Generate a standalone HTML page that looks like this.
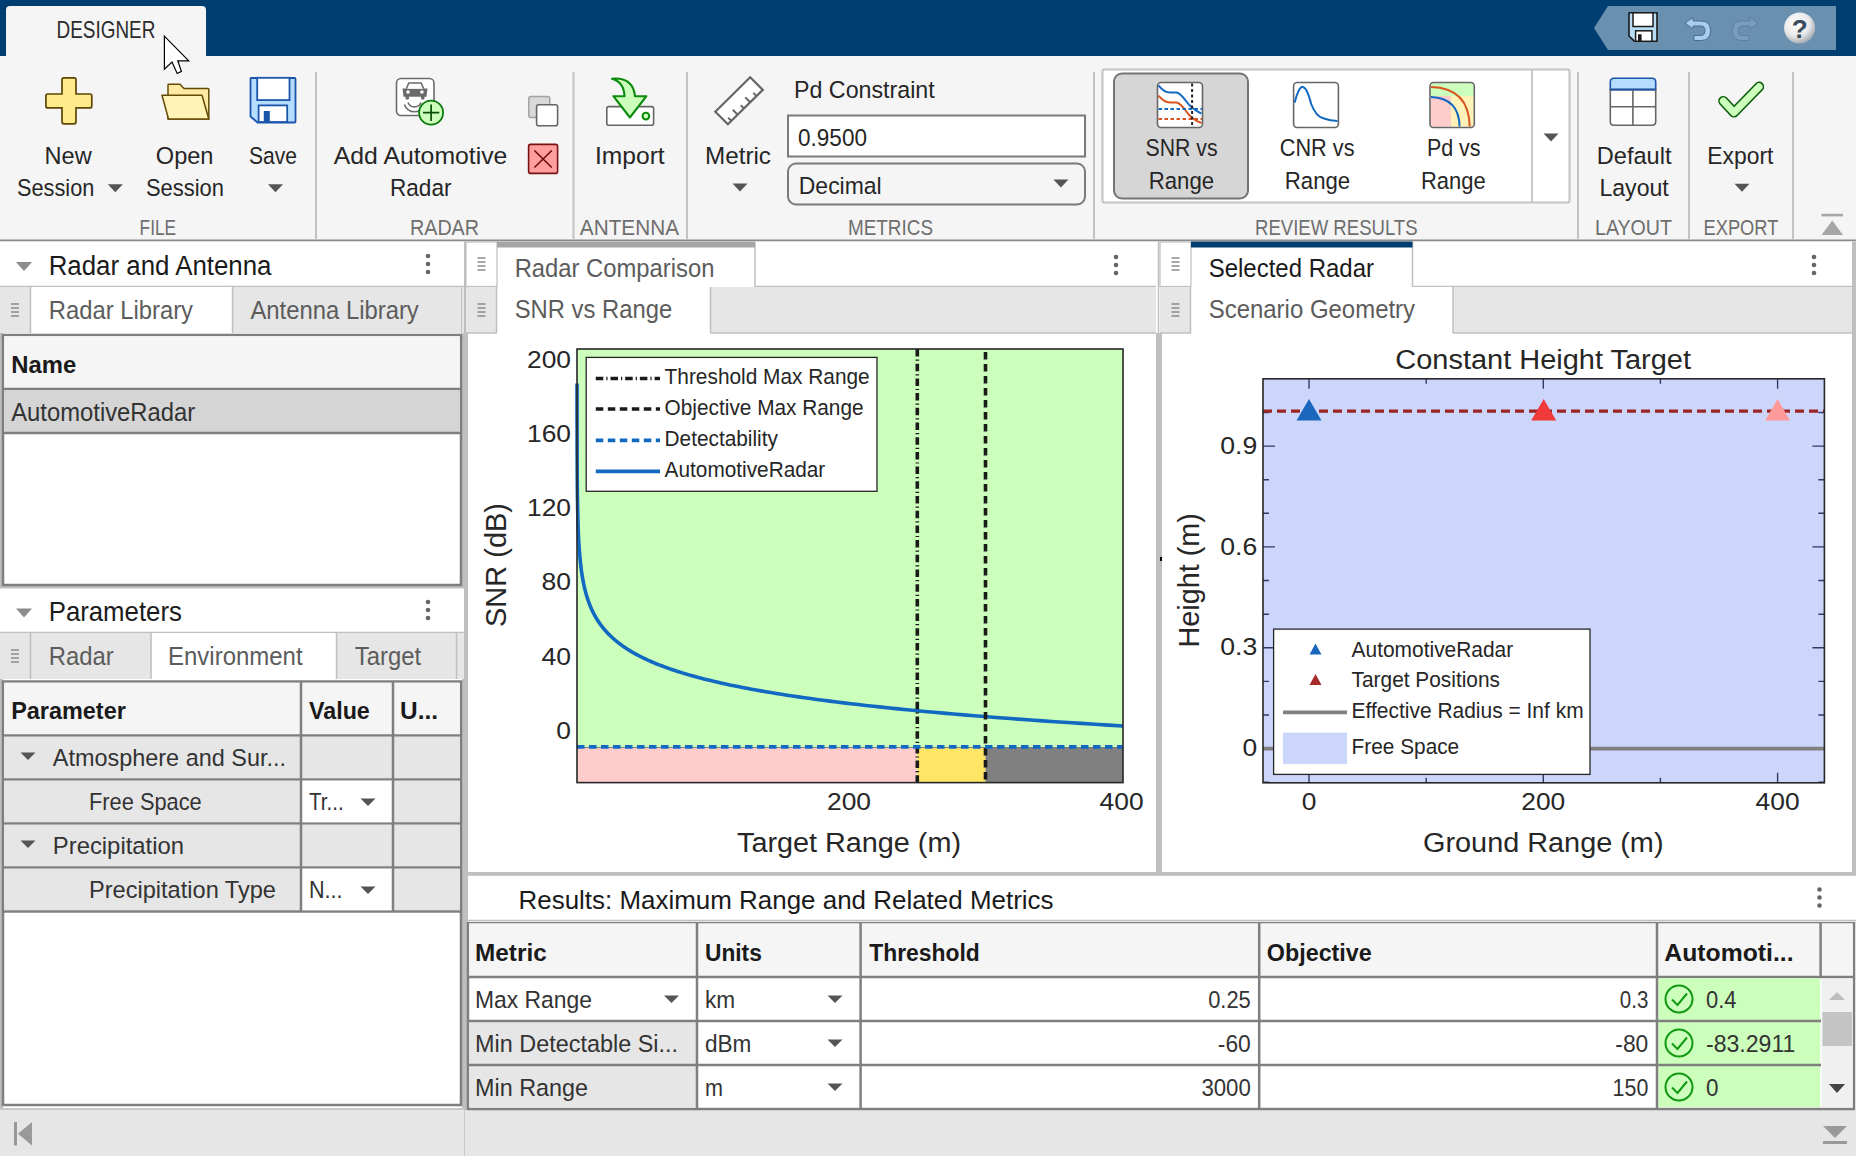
<!DOCTYPE html>
<html><head><meta charset="utf-8"><title>Radar Designer</title>
<style>
html,body{margin:0;padding:0;width:1856px;height:1156px;overflow:hidden;background:#f5f5f5;}
svg{position:absolute;left:0;top:0;display:block;font-family:"Liberation Sans",sans-serif;}
</style></head><body>
<svg width="1856" height="1156" viewBox="0 0 1856 1156">
<rect x="0" y="0" width="1856" height="56" fill="#003e72"/>
<path d="M6 56 V10 Q6 6 10 6 H202 Q206 6 206 10 V56 Z" fill="#f5f5f5"/>
<text x="56.6" y="37.6" font-size="23.26" fill="#2b2b2b" textLength="98.8" lengthAdjust="spacingAndGlyphs">DESIGNER</text>
<path d="M1608 6 H1836 V50 H1608 L1594 28 Z" fill="#6990ae"/>
<rect x="0" y="56" width="1856" height="184" fill="#f5f5f5"/>
<line x1="0" y1="240.5" x2="1856" y2="240.5" stroke="#8c8c8c" stroke-width="2"/>
<line x1="316" y1="72" x2="316" y2="239" stroke="#c2c2c2" stroke-width="2"/>
<line x1="573.5" y1="72" x2="573.5" y2="239" stroke="#c2c2c2" stroke-width="2"/>
<line x1="687" y1="72" x2="687" y2="239" stroke="#c2c2c2" stroke-width="2"/>
<line x1="1094" y1="72" x2="1094" y2="239" stroke="#c2c2c2" stroke-width="2"/>
<line x1="1578" y1="72" x2="1578" y2="239" stroke="#c2c2c2" stroke-width="2"/>
<line x1="1689" y1="72" x2="1689" y2="239" stroke="#c2c2c2" stroke-width="2"/>
<line x1="1793" y1="72" x2="1793" y2="239" stroke="#c2c2c2" stroke-width="2"/>
<rect x="1102.5" y="69.5" width="467" height="133" fill="#ffffff" stroke="#c4c4c4" stroke-width="2" rx="2"/>
<rect x="1114" y="73.5" width="134" height="125" fill="#d6d6d6" stroke="#737373" stroke-width="2" rx="8"/>
<line x1="1532" y1="70" x2="1532" y2="202" stroke="#c8c8c8" stroke-width="2"/>
<text x="44.5" y="163.8" font-size="24.13" fill="#262626" textLength="47.2" lengthAdjust="spacingAndGlyphs">New</text>
<text x="17.0" y="195.8" font-size="24.13" fill="#262626" textLength="77.3" lengthAdjust="spacingAndGlyphs">Session</text>
<text x="155.8" y="163.8" font-size="24.13" fill="#262626" textLength="57.7" lengthAdjust="spacingAndGlyphs">Open</text>
<text x="146.0" y="195.8" font-size="24.13" fill="#262626" textLength="78.0" lengthAdjust="spacingAndGlyphs">Session</text>
<text x="249.0" y="163.8" font-size="24.13" fill="#262626" textLength="48.0" lengthAdjust="spacingAndGlyphs">Save</text>
<text x="333.8" y="163.8" font-size="24.13" fill="#262626" textLength="173.6" lengthAdjust="spacingAndGlyphs">Add Automotive</text>
<text x="390.0" y="195.8" font-size="24.13" fill="#262626" textLength="61.5" lengthAdjust="spacingAndGlyphs">Radar</text>
<text x="595.0" y="163.8" font-size="24.13" fill="#262626" textLength="69.7" lengthAdjust="spacingAndGlyphs">Import</text>
<text x="705.0" y="163.8" font-size="24.13" fill="#262626" textLength="66.0" lengthAdjust="spacingAndGlyphs">Metric</text>
<text x="794.0" y="98.4" font-size="24.13" fill="#262626" textLength="140.7" lengthAdjust="spacingAndGlyphs">Pd Constraint</text>
<text x="1145.6" y="156.0" font-size="24.13" fill="#262626" textLength="72.0" lengthAdjust="spacingAndGlyphs">SNR vs</text>
<text x="1148.8" y="188.5" font-size="24.13" fill="#262626" textLength="65.3" lengthAdjust="spacingAndGlyphs">Range</text>
<text x="1279.8" y="156.0" font-size="24.13" fill="#262626" textLength="74.7" lengthAdjust="spacingAndGlyphs">CNR vs</text>
<text x="1284.8" y="188.5" font-size="24.13" fill="#262626" textLength="65.4" lengthAdjust="spacingAndGlyphs">Range</text>
<text x="1426.9" y="156.0" font-size="24.13" fill="#262626" textLength="53.7" lengthAdjust="spacingAndGlyphs">Pd vs</text>
<text x="1420.9" y="188.5" font-size="24.13" fill="#262626" textLength="64.7" lengthAdjust="spacingAndGlyphs">Range</text>
<text x="1596.8" y="163.8" font-size="24.13" fill="#262626" textLength="74.7" lengthAdjust="spacingAndGlyphs">Default</text>
<text x="1599.4" y="195.8" font-size="24.13" fill="#262626" textLength="69.4" lengthAdjust="spacingAndGlyphs">Layout</text>
<text x="1707.3" y="163.8" font-size="24.13" fill="#262626" textLength="66.1" lengthAdjust="spacingAndGlyphs">Export</text>
<text x="139.6" y="234.5" font-size="22.67" fill="#6e6e6e" textLength="36.5" lengthAdjust="spacingAndGlyphs">FILE</text>
<text x="410.0" y="234.5" font-size="22.67" fill="#6e6e6e" textLength="69.0" lengthAdjust="spacingAndGlyphs">RADAR</text>
<text x="579.8" y="234.5" font-size="22.67" fill="#6e6e6e" textLength="99.2" lengthAdjust="spacingAndGlyphs">ANTENNA</text>
<text x="848.0" y="234.5" font-size="22.67" fill="#6e6e6e" textLength="85.0" lengthAdjust="spacingAndGlyphs">METRICS</text>
<text x="1255.0" y="234.5" font-size="22.67" fill="#6e6e6e" textLength="162.6" lengthAdjust="spacingAndGlyphs">REVIEW RESULTS</text>
<text x="1595.0" y="234.5" font-size="22.67" fill="#6e6e6e" textLength="77.0" lengthAdjust="spacingAndGlyphs">LAYOUT</text>
<text x="1703.6" y="234.5" font-size="22.67" fill="#6e6e6e" textLength="74.7" lengthAdjust="spacingAndGlyphs">EXPORT</text>
<rect x="788" y="115.5" width="297" height="41" fill="#ffffff" stroke="#7a7a7a" stroke-width="2"/>
<text x="798.0" y="146.0" font-size="24.13" fill="#262626" textLength="69.0" lengthAdjust="spacingAndGlyphs">0.9500</text>
<rect x="788" y="163.5" width="297" height="41" fill="#f5f5f5" stroke="#7a7a7a" stroke-width="2" rx="8"/>
<text x="798.8" y="193.8" font-size="24.13" fill="#262626" textLength="82.9" lengthAdjust="spacingAndGlyphs">Decimal</text>
<rect x="0" y="241.5" width="1856" height="914.5" fill="#ffffff"/>
<rect x="464" y="241.5" width="4" height="914.5" fill="#bfbfbf"/>
<rect x="1156" y="333" width="6" height="540" fill="#bfbfbf"/>
<line x1="1158.5" y1="241.5" x2="1158.5" y2="333" stroke="#bfbfbf" stroke-width="1.5"/>
<rect x="468" y="872" width="1388" height="3.8" fill="#bfbfbf"/>
<rect x="0" y="585.5" width="464" height="3" fill="#bfbfbf"/>
<path d="M16 262 H32 L24 271 Z" fill="#8c8c8c"/>
<text x="48.7" y="274.8" font-size="27.62" fill="#1a1a1a" textLength="222.8" lengthAdjust="spacingAndGlyphs">Radar and Antenna</text>
<circle cx="428" cy="256" r="2.3" fill="#666"/>
<circle cx="428" cy="264" r="2.3" fill="#666"/>
<circle cx="428" cy="272" r="2.3" fill="#666"/>
<line x1="0" y1="286.5" x2="464" y2="286.5" stroke="#bfbfbf" stroke-width="1.5"/>
<rect x="0" y="287" width="464" height="46" fill="#e6e6e6"/>
<rect x="31" y="287" width="202" height="46" fill="#ffffff"/>
<line x1="232.5" y1="287" x2="232.5" y2="333" stroke="#bfbfbf" stroke-width="1.5"/>
<line x1="30.5" y1="287" x2="30.5" y2="333" stroke="#bfbfbf" stroke-width="1.5"/>
<line x1="461.5" y1="287" x2="461.5" y2="333" stroke="#bfbfbf" stroke-width="1"/>
<rect x="11" y="303.25" width="8" height="1.5" fill="#8c8c8c"/>
<rect x="11" y="307.25" width="8" height="1.5" fill="#8c8c8c"/>
<rect x="11" y="311.25" width="8" height="1.5" fill="#8c8c8c"/>
<rect x="11" y="315.25" width="8" height="1.5" fill="#8c8c8c"/>
<text x="48.7" y="319.0" font-size="25.58" fill="#5c5c5c" textLength="144.3" lengthAdjust="spacingAndGlyphs">Radar Library</text>
<text x="250.4" y="319.0" font-size="25.58" fill="#5c5c5c" textLength="168.4" lengthAdjust="spacingAndGlyphs">Antenna Library</text>
<rect x="462" y="333" width="2" height="253" fill="#bfbfbf"/>
<rect x="0" y="333" width="3" height="253" fill="#bfbfbf"/>
<rect x="3" y="335" width="458" height="250" fill="#ffffff" stroke="#7f7f7f" stroke-width="2.5"/>
<rect x="4.25" y="336.25" width="455.5" height="52" fill="#f5f5f5"/>
<line x1="3" y1="389" x2="461" y2="389" stroke="#7f7f7f" stroke-width="2.5"/>
<rect x="4.25" y="390.25" width="455.5" height="42" fill="#d5d5d5"/>
<line x1="3" y1="433" x2="461" y2="433" stroke="#7f7f7f" stroke-width="2.5"/>
<text x="11.2" y="373.0" font-size="23.98" fill="#1a1a1a" font-weight="bold" textLength="65.0" lengthAdjust="spacingAndGlyphs">Name</text>
<text x="11.2" y="420.5" font-size="25.29" fill="#333333" textLength="184.0" lengthAdjust="spacingAndGlyphs">AutomotiveRadar</text>
<path d="M16 608.5 H32 L24 617.5 Z" fill="#8c8c8c"/>
<text x="48.7" y="621.0" font-size="27.03" fill="#1a1a1a" textLength="133.2" lengthAdjust="spacingAndGlyphs">Parameters</text>
<circle cx="428" cy="602" r="2.3" fill="#666"/>
<circle cx="428" cy="610" r="2.3" fill="#666"/>
<circle cx="428" cy="618" r="2.3" fill="#666"/>
<line x1="0" y1="632.5" x2="464" y2="632.5" stroke="#bfbfbf" stroke-width="1.5"/>
<rect x="0" y="633" width="464" height="46" fill="#e6e6e6"/>
<rect x="151.5" y="633" width="185" height="46" fill="#ffffff"/>
<line x1="30.5" y1="633" x2="30.5" y2="679" stroke="#bfbfbf" stroke-width="1.5"/>
<line x1="151" y1="633" x2="151" y2="679" stroke="#bfbfbf" stroke-width="1.5"/>
<line x1="336.5" y1="633" x2="336.5" y2="679" stroke="#bfbfbf" stroke-width="1.5"/>
<line x1="456.5" y1="633" x2="456.5" y2="679" stroke="#bfbfbf" stroke-width="1.5"/>
<rect x="11" y="649.25" width="8" height="1.5" fill="#8c8c8c"/>
<rect x="11" y="653.25" width="8" height="1.5" fill="#8c8c8c"/>
<rect x="11" y="657.25" width="8" height="1.5" fill="#8c8c8c"/>
<rect x="11" y="661.25" width="8" height="1.5" fill="#8c8c8c"/>
<text x="48.7" y="665.0" font-size="25.58" fill="#5c5c5c" textLength="65.0" lengthAdjust="spacingAndGlyphs">Radar</text>
<text x="168.0" y="665.0" font-size="25.58" fill="#5c5c5c" textLength="134.6" lengthAdjust="spacingAndGlyphs">Environment</text>
<text x="354.8" y="665.0" font-size="25.58" fill="#5c5c5c" textLength="66.2" lengthAdjust="spacingAndGlyphs">Target</text>
<rect x="0" y="679" width="3" height="431" fill="#bfbfbf"/>
<rect x="462" y="679" width="2" height="431" fill="#bfbfbf"/>
<rect x="3" y="681.5" width="458" height="423.5" fill="#ffffff" stroke="#7f7f7f" stroke-width="2.5"/>
<rect x="4.25" y="682.75" width="455.5" height="52" fill="#f5f5f5"/>
<line x1="3" y1="735.5" x2="461" y2="735.5" stroke="#7f7f7f" stroke-width="2.5"/>
<rect x="4.25" y="736.75" width="455.5" height="41.5" fill="#e6e6e6"/>
<line x1="3" y1="779.5" x2="461" y2="779.5" stroke="#7f7f7f" stroke-width="2.5"/>
<rect x="4.25" y="780.75" width="455.5" height="41.5" fill="#e6e6e6"/>
<line x1="3" y1="823.5" x2="461" y2="823.5" stroke="#7f7f7f" stroke-width="2.5"/>
<rect x="4.25" y="824.75" width="455.5" height="41.5" fill="#e6e6e6"/>
<line x1="3" y1="867.5" x2="461" y2="867.5" stroke="#7f7f7f" stroke-width="2.5"/>
<rect x="4.25" y="868.75" width="455.5" height="41.5" fill="#e6e6e6"/>
<line x1="3" y1="911.5" x2="461" y2="911.5" stroke="#7f7f7f" stroke-width="2.5"/>
<rect x="302" y="780.75" width="90" height="41.5" fill="#ffffff"/>
<rect x="302" y="868.75" width="90" height="41.5" fill="#ffffff"/>
<line x1="301" y1="682" x2="301" y2="911.5" stroke="#7f7f7f" stroke-width="2.5"/>
<line x1="393" y1="682" x2="393" y2="911.5" stroke="#7f7f7f" stroke-width="2.5"/>
<text x="11.2" y="719.3" font-size="23.98" fill="#1a1a1a" font-weight="bold" textLength="114.6" lengthAdjust="spacingAndGlyphs">Parameter</text>
<text x="309.0" y="719.3" font-size="23.98" fill="#1a1a1a" font-weight="bold" textLength="60.8" lengthAdjust="spacingAndGlyphs">Value</text>
<text x="400.0" y="719.3" font-size="23.98" fill="#1a1a1a" font-weight="bold" textLength="38.0" lengthAdjust="spacingAndGlyphs">U...</text>
<path d="M20.5 752.5 H35.5 L28 760 Z" fill="#555"/>
<path d="M20.5 840.5 H35.5 L28 848 Z" fill="#555"/>
<text x="52.8" y="765.7" font-size="23.84" fill="#333333" textLength="233.2" lengthAdjust="spacingAndGlyphs">Atmosphere and Sur...</text>
<text x="89.0" y="809.7" font-size="23.84" fill="#333333" textLength="112.7" lengthAdjust="spacingAndGlyphs">Free Space</text>
<text x="309.0" y="809.7" font-size="23.84" fill="#333333" textLength="34.6" lengthAdjust="spacingAndGlyphs">Tr...</text>
<path d="M360.5 798.5 H375.5 L368 806 Z" fill="#555"/>
<text x="52.8" y="853.7" font-size="23.84" fill="#333333" textLength="131.2" lengthAdjust="spacingAndGlyphs">Precipitation</text>
<text x="89.0" y="897.7" font-size="23.84" fill="#333333" textLength="187.0" lengthAdjust="spacingAndGlyphs">Precipitation Type</text>
<text x="309.0" y="897.7" font-size="23.84" fill="#333333" textLength="33.6" lengthAdjust="spacingAndGlyphs">N...</text>
<path d="M360.5 886.5 H375.5 L368 894 Z" fill="#555"/>
<rect x="0" y="1110" width="1856" height="46" fill="#e6e6e6"/>
<line x1="0" y1="1109" x2="464" y2="1109" stroke="#c8c8c8" stroke-width="2"/>
<line x1="464.5" y1="1110" x2="464.5" y2="1156" stroke="#c8c8c8" stroke-width="1"/>
<rect x="14" y="1122" width="3" height="23.5" fill="#999"/><path d="M32 1122 V1145.5 L18 1133.7 Z" fill="#999"/>
<path d="M1823 1126 H1847 L1835 1138 Z" fill="#999"/><rect x="1823" y="1141" width="24" height="3" fill="#999"/>
<line x1="755" y1="286.5" x2="1156" y2="286.5" stroke="#bfbfbf" stroke-width="1.5"/>
<rect x="466" y="242" width="31" height="44.5" fill="#ffffff" stroke="#bfbfbf" stroke-width="1.2"/>
<rect x="477.5" y="257.25" width="8" height="1.5" fill="#8c8c8c"/>
<rect x="477.5" y="261.25" width="8" height="1.5" fill="#8c8c8c"/>
<rect x="477.5" y="265.25" width="8" height="1.5" fill="#8c8c8c"/>
<rect x="477.5" y="269.25" width="8" height="1.5" fill="#8c8c8c"/>
<line x1="755" y1="242" x2="755" y2="287" stroke="#bfbfbf" stroke-width="1.5"/>
<rect x="497" y="241.5" width="258" height="6" fill="#a6a6a6"/>
<text x="514.7" y="277.0" font-size="24.85" fill="#5c5c5c" textLength="199.7" lengthAdjust="spacingAndGlyphs">Radar Comparison</text>
<circle cx="1116" cy="257" r="2.3" fill="#666"/>
<circle cx="1116" cy="265" r="2.3" fill="#666"/>
<circle cx="1116" cy="273" r="2.3" fill="#666"/>
<rect x="466" y="287" width="690" height="46" fill="#e6e6e6"/>
<rect x="497" y="287" width="213.5" height="46" fill="#ffffff"/>
<line x1="496.5" y1="287" x2="496.5" y2="333" stroke="#bfbfbf" stroke-width="1.5"/>
<line x1="710.5" y1="287" x2="710.5" y2="333" stroke="#bfbfbf" stroke-width="1.5"/>
<line x1="466" y1="333" x2="497" y2="333" stroke="#bfbfbf" stroke-width="1.5"/>
<line x1="710.5" y1="333" x2="1156" y2="333" stroke="#bfbfbf" stroke-width="1.5"/>
<rect x="477.5" y="303.25" width="8" height="1.5" fill="#8c8c8c"/>
<rect x="477.5" y="307.25" width="8" height="1.5" fill="#8c8c8c"/>
<rect x="477.5" y="311.25" width="8" height="1.5" fill="#8c8c8c"/>
<rect x="477.5" y="315.25" width="8" height="1.5" fill="#8c8c8c"/>
<text x="514.7" y="318.4" font-size="24.85" fill="#5c5c5c" textLength="157.6" lengthAdjust="spacingAndGlyphs">SNR vs Range</text>
<line x1="1412.5" y1="286.5" x2="1852" y2="286.5" stroke="#bfbfbf" stroke-width="1.5"/>
<rect x="1160" y="242" width="31" height="44.5" fill="#ffffff" stroke="#bfbfbf" stroke-width="1.2"/>
<rect x="1171.5" y="257.25" width="8" height="1.5" fill="#8c8c8c"/>
<rect x="1171.5" y="261.25" width="8" height="1.5" fill="#8c8c8c"/>
<rect x="1171.5" y="265.25" width="8" height="1.5" fill="#8c8c8c"/>
<rect x="1171.5" y="269.25" width="8" height="1.5" fill="#8c8c8c"/>
<line x1="1412.5" y1="242" x2="1412.5" y2="287" stroke="#bfbfbf" stroke-width="1.5"/>
<rect x="1191" y="241.5" width="221.5" height="6" fill="#003e72"/>
<text x="1208.7" y="277.0" font-size="24.85" fill="#1a1a1a" textLength="165.3" lengthAdjust="spacingAndGlyphs">Selected Radar</text>
<circle cx="1814" cy="257" r="2.3" fill="#666"/>
<circle cx="1814" cy="265" r="2.3" fill="#666"/>
<circle cx="1814" cy="273" r="2.3" fill="#666"/>
<rect x="1160" y="287" width="692" height="46" fill="#e6e6e6"/>
<rect x="1191" y="287" width="262" height="46" fill="#ffffff"/>
<line x1="1190.5" y1="287" x2="1190.5" y2="333" stroke="#bfbfbf" stroke-width="1.5"/>
<line x1="1453" y1="287" x2="1453" y2="333" stroke="#bfbfbf" stroke-width="1.5"/>
<line x1="1160" y1="333" x2="1191" y2="333" stroke="#bfbfbf" stroke-width="1.5"/>
<line x1="1453" y1="333" x2="1852" y2="333" stroke="#bfbfbf" stroke-width="1.5"/>
<rect x="1171.5" y="303.25" width="8" height="1.5" fill="#8c8c8c"/>
<rect x="1171.5" y="307.25" width="8" height="1.5" fill="#8c8c8c"/>
<rect x="1171.5" y="311.25" width="8" height="1.5" fill="#8c8c8c"/>
<rect x="1171.5" y="315.25" width="8" height="1.5" fill="#8c8c8c"/>
<text x="1208.7" y="318.4" font-size="24.85" fill="#5c5c5c" textLength="206.4" lengthAdjust="spacingAndGlyphs">Scenario Geometry</text>
<rect x="1852" y="241.5" width="4" height="632" fill="#bfbfbf"/>
<text x="518.5" y="908.5" font-size="25.87" fill="#1a1a1a" textLength="535.0" lengthAdjust="spacingAndGlyphs">Results: Maximum Range and Related Metrics</text>
<circle cx="1819.5" cy="889.5" r="2.3" fill="#666"/>
<circle cx="1819.5" cy="897.5" r="2.3" fill="#666"/>
<circle cx="1819.5" cy="905.5" r="2.3" fill="#666"/>
<line x1="468" y1="920.5" x2="1856" y2="920.5" stroke="#bfbfbf" stroke-width="1.5"/>
<rect x="468" y="923.2" width="1386" height="185.8" fill="#ffffff" stroke="#7f7f7f" stroke-width="2.5"/>
<rect x="469.25" y="923.25" width="1383.5" height="52.5" fill="#f5f5f5"/>
<line x1="468" y1="977" x2="1854" y2="977" stroke="#7f7f7f" stroke-width="2.5"/>
<rect x="1821.5" y="978.5" width="31" height="129" fill="#f0f0f0"/>
<rect x="469.25" y="1022.25" width="227" height="85" fill="#e6e6e6"/>
<line x1="468" y1="1021" x2="1821" y2="1021" stroke="#7f7f7f" stroke-width="2.5"/>
<line x1="468" y1="1065" x2="1821" y2="1065" stroke="#7f7f7f" stroke-width="2.5"/>
<rect x="1658.25" y="978.25" width="162" height="129" fill="#ccffbb"/>
<line x1="1658.25" y1="1021" x2="1821" y2="1021" stroke="#7f7f7f" stroke-width="2.5"/>
<line x1="1658.25" y1="1065" x2="1821" y2="1065" stroke="#7f7f7f" stroke-width="2.5"/>
<line x1="697" y1="922" x2="697" y2="1108.5" stroke="#7f7f7f" stroke-width="2.5"/>
<line x1="860.6" y1="922" x2="860.6" y2="1108.5" stroke="#7f7f7f" stroke-width="2.5"/>
<line x1="1259.2" y1="922" x2="1259.2" y2="1108.5" stroke="#7f7f7f" stroke-width="2.5"/>
<line x1="1657" y1="922" x2="1657" y2="1108.5" stroke="#7f7f7f" stroke-width="2.5"/>
<line x1="1820.6" y1="922" x2="1820.6" y2="977" stroke="#7f7f7f" stroke-width="2.5"/>
<text x="475.0" y="960.5" font-size="23.98" fill="#1a1a1a" font-weight="bold" textLength="71.8" lengthAdjust="spacingAndGlyphs">Metric</text>
<text x="705.0" y="960.5" font-size="23.98" fill="#1a1a1a" font-weight="bold" textLength="56.8" lengthAdjust="spacingAndGlyphs">Units</text>
<text x="869.3" y="960.5" font-size="23.98" fill="#1a1a1a" font-weight="bold" textLength="110.5" lengthAdjust="spacingAndGlyphs">Threshold</text>
<text x="1266.8" y="960.5" font-size="23.98" fill="#1a1a1a" font-weight="bold" textLength="105.0" lengthAdjust="spacingAndGlyphs">Objective</text>
<text x="1664.3" y="960.5" font-size="23.98" fill="#1a1a1a" font-weight="bold" textLength="129.3" lengthAdjust="spacingAndGlyphs">Automoti...</text>
<text x="475.0" y="1007.7" font-size="23.55" fill="#333333" textLength="117.0" lengthAdjust="spacingAndGlyphs">Max Range</text>
<text x="705.0" y="1007.7" font-size="23.55" fill="#333333" textLength="30.2" lengthAdjust="spacingAndGlyphs">km</text>
<text x="1250.8" y="1007.7" font-size="23.55" fill="#333333" text-anchor="end" textLength="42.6" lengthAdjust="spacingAndGlyphs">0.25</text>
<text x="1648.3" y="1007.7" font-size="23.55" fill="#333333" text-anchor="end" textLength="28.5" lengthAdjust="spacingAndGlyphs">0.3</text>
<text x="1706.0" y="1007.7" font-size="23.55" fill="#333333" textLength="30.5" lengthAdjust="spacingAndGlyphs">0.4</text>
<path d="M664.0 995.5 H679.0 L671.5 1003 Z" fill="#555"/>
<path d="M827.5 995.5 H842.5 L835 1003 Z" fill="#555"/>
<circle cx="1679" cy="999" r="13.5" fill="none" stroke="#119911" stroke-width="2"/>
<path d="M1672 999.5 L1677.5 1005 L1687 993.5" fill="none" stroke="#119911" stroke-width="2"/>
<text x="475.0" y="1051.7" font-size="23.55" fill="#333333" textLength="203.0" lengthAdjust="spacingAndGlyphs">Min Detectable Si...</text>
<text x="705.0" y="1051.7" font-size="23.55" fill="#333333" textLength="46.4" lengthAdjust="spacingAndGlyphs">dBm</text>
<text x="1250.8" y="1051.7" font-size="23.55" fill="#333333" text-anchor="end" textLength="33.0" lengthAdjust="spacingAndGlyphs">-60</text>
<text x="1648.3" y="1051.7" font-size="23.55" fill="#333333" text-anchor="end" textLength="33.0" lengthAdjust="spacingAndGlyphs">-80</text>
<text x="1706.0" y="1051.7" font-size="23.55" fill="#333333" textLength="89.4" lengthAdjust="spacingAndGlyphs">-83.2911</text>
<path d="M827.5 1039.5 H842.5 L835 1047 Z" fill="#555"/>
<circle cx="1679" cy="1043" r="13.5" fill="none" stroke="#119911" stroke-width="2"/>
<path d="M1672 1043.5 L1677.5 1049 L1687 1037.5" fill="none" stroke="#119911" stroke-width="2"/>
<text x="475.0" y="1095.7" font-size="23.55" fill="#333333" textLength="113.0" lengthAdjust="spacingAndGlyphs">Min Range</text>
<text x="705.0" y="1095.7" font-size="23.55" fill="#333333" textLength="18.0" lengthAdjust="spacingAndGlyphs">m</text>
<text x="1250.8" y="1095.7" font-size="23.55" fill="#333333" text-anchor="end" textLength="49.4" lengthAdjust="spacingAndGlyphs">3000</text>
<text x="1648.3" y="1095.7" font-size="23.55" fill="#333333" text-anchor="end" textLength="35.7" lengthAdjust="spacingAndGlyphs">150</text>
<text x="1706.0" y="1095.7" font-size="23.55" fill="#333333" textLength="12.5" lengthAdjust="spacingAndGlyphs">0</text>
<path d="M827.5 1083.5 H842.5 L835 1091 Z" fill="#555"/>
<circle cx="1679" cy="1087" r="13.5" fill="none" stroke="#119911" stroke-width="2"/>
<path d="M1672 1087.5 L1677.5 1093 L1687 1081.5" fill="none" stroke="#119911" stroke-width="2"/>
<path d="M1829 1000 H1845 L1837 992 Z" fill="#bdbdbd"/>
<rect x="1822.5" y="1012" width="29.5" height="34" fill="#c4c4c4"/>
<path d="M1829 1084 H1845 L1837 1093 Z" fill="#444"/>
<rect x="577" y="349" width="546" height="433.6" fill="#ccffbb"/>
<rect x="577" y="747.5" width="340.29999999999995" height="35.10000000000002" fill="#ffcccc"/>
<rect x="917.3" y="747.5" width="68.20000000000005" height="35.10000000000002" fill="#ffe566"/>
<rect x="985.5" y="747.5" width="137.5" height="35.10000000000002" fill="#808080"/>
<line x1="577" y1="747.5" x2="1123" y2="747.5" stroke="#808080" stroke-width="1.2"/>
<path d="M577.01 383.49 L577.01 384.35 L577.01 385.21 L577.01 386.06 L577.01 386.92 L577.02 387.77 L577.02 388.63 L577.02 389.49 L577.02 390.34 L577.02 391.20 L577.02 392.06 L577.02 392.91 L577.02 393.77 L577.02 394.62 L577.02 395.48 L577.02 396.34 L577.02 397.19 L577.02 398.05 L577.02 398.91 L577.02 399.76 L577.02 400.62 L577.02 401.47 L577.02 402.33 L577.02 403.19 L577.03 404.04 L577.03 404.90 L577.03 405.76 L577.03 406.61 L577.03 407.47 L577.03 408.32 L577.03 409.18 L577.03 410.04 L577.03 410.89 L577.03 411.75 L577.03 412.61 L577.03 413.46 L577.03 414.32 L577.04 415.17 L577.04 416.03 L577.04 416.89 L577.04 417.74 L577.04 418.60 L577.04 419.46 L577.04 420.31 L577.04 421.17 L577.04 422.02 L577.05 422.88 L577.05 423.74 L577.05 424.59 L577.05 425.45 L577.05 426.30 L577.05 427.16 L577.05 428.02 L577.05 428.87 L577.06 429.73 L577.06 430.59 L577.06 431.44 L577.06 432.30 L577.06 433.15 L577.06 434.01 L577.07 434.87 L577.07 435.72 L577.07 436.58 L577.07 437.44 L577.07 438.29 L577.08 439.15 L577.08 440.00 L577.08 440.86 L577.08 441.72 L577.08 442.57 L577.09 443.43 L577.09 444.29 L577.09 445.14 L577.09 446.00 L577.10 446.85 L577.10 447.71 L577.10 448.57 L577.10 449.42 L577.11 450.28 L577.11 451.14 L577.11 451.99 L577.11 452.85 L577.12 453.70 L577.12 454.56 L577.12 455.42 L577.13 456.27 L577.13 457.13 L577.13 457.99 L577.14 458.84 L577.14 459.70 L577.15 460.55 L577.15 461.41 L577.15 462.27 L577.16 463.12 L577.16 463.98 L577.17 464.84 L577.17 465.69 L577.18 466.55 L577.18 467.40 L577.19 468.26 L577.19 469.12 L577.20 469.97 L577.20 470.83 L577.21 471.69 L577.21 472.54 L577.22 473.40 L577.22 474.25 L577.23 475.11 L577.24 475.97 L577.24 476.82 L577.25 477.68 L577.25 478.54 L577.26 479.39 L577.27 480.25 L577.28 481.10 L577.28 481.96 L577.29 482.82 L577.30 483.67 L577.31 484.53 L577.31 485.38 L577.32 486.24 L577.33 487.10 L577.34 487.95 L577.35 488.81 L577.36 489.67 L577.37 490.52 L577.38 491.38 L577.39 492.23 L577.40 493.09 L577.41 493.95 L577.42 494.80 L577.43 495.66 L577.44 496.52 L577.46 497.37 L577.47 498.23 L577.48 499.08 L577.49 499.94 L577.51 500.80 L577.52 501.65 L577.54 502.51 L577.55 503.37 L577.56 504.22 L577.58 505.08 L577.60 505.93 L577.61 506.79 L577.63 507.65 L577.64 508.50 L577.66 509.36 L577.68 510.22 L577.70 511.07 L577.72 511.93 L577.74 512.78 L577.76 513.64 L577.78 514.50 L577.80 515.35 L577.82 516.21 L577.84 517.07 L577.86 517.92 L577.89 518.78 L577.91 519.63 L577.93 520.49 L577.96 521.35 L577.99 522.20 L578.01 523.06 L578.04 523.92 L578.07 524.77 L578.10 525.63 L578.13 526.48 L578.16 527.34 L578.19 528.20 L578.22 529.05 L578.25 529.91 L578.29 530.77 L578.32 531.62 L578.36 532.48 L578.39 533.33 L578.43 534.19 L578.47 535.05 L578.51 535.90 L578.55 536.76 L578.59 537.62 L578.63 538.47 L578.68 539.33 L578.72 540.18 L578.77 541.04 L578.81 541.90 L578.86 542.75 L578.91 543.61 L578.97 544.46 L579.02 545.32 L579.07 546.18 L579.13 547.03 L579.19 547.89 L579.24 548.75 L579.30 549.60 L579.37 550.46 L579.43 551.31 L579.50 552.17 L579.56 553.03 L579.63 553.88 L579.70 554.74 L579.78 555.60 L579.85 556.45 L579.93 557.31 L580.01 558.16 L580.09 559.02 L580.17 559.88 L580.25 560.73 L580.34 561.59 L580.43 562.45 L580.52 563.30 L580.62 564.16 L580.72 565.01 L580.82 565.87 L580.92 566.73 L581.02 567.58 L581.13 568.44 L581.24 569.30 L581.36 570.15 L581.47 571.01 L581.60 571.86 L581.72 572.72 L581.85 573.58 L581.98 574.43 L582.11 575.29 L582.25 576.15 L582.39 577.00 L582.53 577.86 L582.68 578.71 L582.84 579.57 L582.99 580.43 L583.15 581.28 L583.32 582.14 L583.49 583.00 L583.66 583.85 L583.84 584.71 L584.03 585.56 L584.22 586.42 L584.41 587.28 L584.61 588.13 L584.81 588.99 L585.02 589.85 L585.24 590.70 L585.46 591.56 L585.69 592.41 L585.92 593.27 L586.16 594.13 L586.41 594.98 L586.66 595.84 L586.92 596.70 L587.19 597.55 L587.46 598.41 L587.74 599.26 L588.03 600.12 L588.33 600.98 L588.63 601.83 L588.95 602.69 L589.27 603.54 L589.60 604.40 L589.94 605.26 L590.29 606.11 L590.64 606.97 L591.01 607.83 L591.39 608.68 L591.77 609.54 L592.17 610.39 L592.58 611.25 L593.00 612.11 L593.43 612.96 L593.87 613.82 L594.32 614.68 L594.79 615.53 L595.27 616.39 L595.76 617.24 L596.27 618.10 L596.78 618.96 L597.32 619.81 L597.86 620.67 L598.42 621.53 L599.00 622.38 L599.59 623.24 L600.20 624.09 L600.82 624.95 L601.46 625.81 L602.12 626.66 L602.80 627.52 L603.49 628.38 L604.20 629.23 L604.94 630.09 L605.69 630.94 L606.46 631.80 L607.25 632.66 L608.06 633.51 L608.90 634.37 L609.76 635.23 L610.64 636.08 L611.54 636.94 L612.47 637.79 L613.43 638.65 L614.41 639.51 L615.41 640.36 L616.45 641.22 L617.51 642.08 L618.60 642.93 L619.72 643.79 L620.87 644.64 L622.05 645.50 L623.26 646.36 L624.50 647.21 L625.78 648.07 L627.09 648.93 L628.44 649.78 L629.82 650.64 L631.24 651.49 L632.70 652.35 L634.20 653.21 L635.74 654.06 L637.32 654.92 L638.94 655.78 L640.61 656.63 L642.32 657.49 L644.07 658.34 L645.88 659.20 L647.73 660.06 L649.63 660.91 L651.59 661.77 L653.59 662.62 L655.65 663.48 L657.77 664.34 L659.94 665.19 L662.17 666.05 L664.46 666.91 L666.82 667.76 L669.23 668.62 L671.71 669.47 L674.26 670.33 L676.88 671.19 L679.56 672.04 L682.32 672.90 L685.15 673.76 L688.06 674.61 L691.05 675.47 L694.12 676.32 L697.27 677.18 L700.50 678.04 L703.82 678.89 L707.24 679.75 L710.74 680.61 L714.34 681.46 L718.03 682.32 L721.82 683.17 L725.72 684.03 L729.72 684.89 L733.83 685.74 L738.04 686.60 L742.38 687.46 L746.82 688.31 L751.39 689.17 L756.08 690.02 L760.90 690.88 L765.85 691.74 L770.93 692.59 L776.14 693.45 L781.50 694.31 L787.00 695.16 L792.65 696.02 L798.45 696.87 L804.40 697.73 L810.52 698.59 L816.80 699.44 L823.25 700.30 L829.88 701.16 L836.68 702.01 L843.66 702.87 L850.83 703.72 L858.20 704.58 L865.76 705.44 L873.53 706.29 L881.51 707.15 L889.70 708.01 L898.11 708.86 L906.74 709.72 L915.61 710.57 L924.72 711.43 L934.07 712.29 L943.68 713.14 L953.54 714.00 L963.67 714.86 L974.07 715.71 L984.75 716.57 L995.72 717.42 L1006.98 718.28 L1018.55 719.14 L1030.42 719.99 L1042.62 720.85 L1055.14 721.70 L1068.00 722.56 L1081.21 723.42 L1094.77 724.27 L1108.70 725.13 L1123.00 725.99" fill="none" stroke="#1269c2" stroke-width="3.6" stroke-linejoin="round"/>
<line x1="917.3" y1="349" x2="917.3" y2="782.6" stroke="#1a1a1a" stroke-width="3.6" stroke-dasharray="7.5 3 1.2 3"/>
<line x1="985.5" y1="352" x2="985.5" y2="782.6" stroke="#1a1a1a" stroke-width="3.6" stroke-dasharray="7.5 4.5"/>
<line x1="577" y1="746.9" x2="1123" y2="746.9" stroke="#1269c2" stroke-width="3.9" stroke-dasharray="7.5 4.5"/>
<rect x="577" y="349" width="546" height="433.6" fill="none" stroke="#262626" stroke-width="1.6"/>
<text x="571.0" y="368.0" font-size="23.69" fill="#262626" text-anchor="end" textLength="44.0" lengthAdjust="spacingAndGlyphs">200</text>
<text x="571.0" y="441.6" font-size="23.69" fill="#262626" text-anchor="end" textLength="44.0" lengthAdjust="spacingAndGlyphs">160</text>
<text x="571.0" y="516.0" font-size="23.69" fill="#262626" text-anchor="end" textLength="44.0" lengthAdjust="spacingAndGlyphs">120</text>
<text x="571.0" y="590.0" font-size="23.69" fill="#262626" text-anchor="end" textLength="29.5" lengthAdjust="spacingAndGlyphs">80</text>
<text x="571.0" y="664.8" font-size="23.69" fill="#262626" text-anchor="end" textLength="29.5" lengthAdjust="spacingAndGlyphs">40</text>
<text x="571.0" y="739.4" font-size="23.69" fill="#262626" text-anchor="end" textLength="14.7" lengthAdjust="spacingAndGlyphs">0</text>
<text x="849.0" y="810.0" font-size="23.69" fill="#262626" text-anchor="middle" textLength="44.0" lengthAdjust="spacingAndGlyphs">200</text>
<text x="1121.6" y="810.0" font-size="23.69" fill="#262626" text-anchor="middle" textLength="44.0" lengthAdjust="spacingAndGlyphs">400</text>
<text x="737.0" y="852.0" font-size="27.62" fill="#262626" textLength="224.0" lengthAdjust="spacingAndGlyphs">Target Range (m)</text>
<text x="0" y="0" font-size="29.94" fill="#262626" textLength="124" lengthAdjust="spacingAndGlyphs" text-anchor="middle" transform="translate(506.3 565) rotate(-90)">SNR (dB)</text>
<rect x="586.2" y="357.4" width="290.8" height="133.9" fill="#ffffff" stroke="#262626" stroke-width="1.3"/>
<line x1="595.8" y1="378.5" x2="660" y2="378.5" stroke="#1a1a1a" stroke-width="3.6" stroke-dasharray="7.5 3 1.2 3"/>
<line x1="595.8" y1="409" x2="660" y2="409" stroke="#1a1a1a" stroke-width="3.6" stroke-dasharray="7.5 4.5"/>
<line x1="595.8" y1="440.4" x2="660" y2="440.4" stroke="#1269c2" stroke-width="3.6" stroke-dasharray="7.5 4.5"/>
<line x1="595.8" y1="471.4" x2="660" y2="471.4" stroke="#1269c2" stroke-width="3.6"/>
<text x="664.6" y="384.0" font-size="22.09" fill="#262626" textLength="205.1" lengthAdjust="spacingAndGlyphs">Threshold Max Range</text>
<text x="664.6" y="415.0" font-size="22.09" fill="#262626" textLength="199.0" lengthAdjust="spacingAndGlyphs">Objective Max Range</text>
<text x="664.6" y="446.0" font-size="22.09" fill="#262626" textLength="113.3" lengthAdjust="spacingAndGlyphs">Detectability</text>
<text x="664.6" y="477.0" font-size="22.09" fill="#262626" textLength="160.7" lengthAdjust="spacingAndGlyphs">AutomotiveRadar</text>
<rect x="1160" y="557" width="2" height="4" fill="#000000"/>
<rect x="1263" y="378.8" width="561.4000000000001" height="403.99999999999994" fill="#ccd6fb"/>
<path d="M1309.0 378.8 v10 M1309.0 782.8 v-10 M1426.2 378.8 v5 M1426.2 782.8 v-5 M1543.3 378.8 v10 M1543.3 782.8 v-10 M1660.4 378.8 v5 M1660.4 782.8 v-5 M1777.6 378.8 v10 M1777.6 782.8 v-10 M1263 782.2 h6 M1824.4 782.2 h-6 M1263 748.6 h12 M1824.4 748.6 h-12 M1263 715.0 h6 M1824.4 715.0 h-6 M1263 681.4 h6 M1824.4 681.4 h-6 M1263 647.8 h12 M1824.4 647.8 h-12 M1263 614.2 h6 M1824.4 614.2 h-6 M1263 580.5 h6 M1824.4 580.5 h-6 M1263 546.9 h12 M1824.4 546.9 h-12 M1263 513.3 h6 M1824.4 513.3 h-6 M1263 479.7 h6 M1824.4 479.7 h-6 M1263 446.1 h12 M1824.4 446.1 h-12 M1263 412.5 h6 M1824.4 412.5 h-6" stroke="#2f3a68" stroke-width="1.4" fill="none"/>
<line x1="1263" y1="748.6" x2="1824.4" y2="748.6" stroke="#808080" stroke-width="3.6"/>
<line x1="1263" y1="411.1" x2="1824.4" y2="411.1" stroke="#9c2424" stroke-width="3.2" stroke-dasharray="9 5"/>
<path d="M1309 399 L1321.5 420.5 L1296.5 420.5 Z" fill="#1b67bd"/>
<path d="M1543.7 399 L1556.2 420.5 L1531.2 420.5 Z" fill="#f03a3a"/>
<path d="M1777.6 399 L1790.1 420.5 L1765.1 420.5 Z" fill="#ff9a9a"/>
<rect x="1263" y="378.8" width="561.4000000000001" height="403.99999999999994" fill="none" stroke="#262626" stroke-width="1.6"/>
<text x="1257.3" y="453.7" font-size="23.69" fill="#262626" text-anchor="end" textLength="37.0" lengthAdjust="spacingAndGlyphs">0.9</text>
<text x="1257.3" y="554.5" font-size="23.69" fill="#262626" text-anchor="end" textLength="37.0" lengthAdjust="spacingAndGlyphs">0.6</text>
<text x="1257.3" y="655.4" font-size="23.69" fill="#262626" text-anchor="end" textLength="37.0" lengthAdjust="spacingAndGlyphs">0.3</text>
<text x="1257.3" y="756.2" font-size="23.69" fill="#262626" text-anchor="end" textLength="14.7" lengthAdjust="spacingAndGlyphs">0</text>
<text x="1309.0" y="809.8" font-size="23.69" fill="#262626" text-anchor="middle" textLength="14.7" lengthAdjust="spacingAndGlyphs">0</text>
<text x="1543.3" y="809.8" font-size="23.69" fill="#262626" text-anchor="middle" textLength="44.0" lengthAdjust="spacingAndGlyphs">200</text>
<text x="1777.6" y="809.8" font-size="23.69" fill="#262626" text-anchor="middle" textLength="44.0" lengthAdjust="spacingAndGlyphs">400</text>
<text x="1395.3" y="369.3" font-size="27.62" fill="#262626" textLength="295.7" lengthAdjust="spacingAndGlyphs">Constant Height Target</text>
<text x="1423.0" y="852.4" font-size="27.62" fill="#262626" textLength="240.5" lengthAdjust="spacingAndGlyphs">Ground Range (m)</text>
<text x="0" y="0" font-size="29.94" fill="#262626" textLength="134.5" lengthAdjust="spacingAndGlyphs" text-anchor="middle" transform="translate(1198.8 580.3) rotate(-90)">Height (m)</text>
<rect x="1273.6" y="629.1" width="316.4" height="145.3" fill="#ffffff" stroke="#262626" stroke-width="1.3"/>
<path d="M1315.5 643.5 L1321.5 654.5 L1309.5 654.5 Z" fill="#1b67bd"/>
<path d="M1315.5 674 L1321.5 685 L1309.5 685 Z" fill="#a52a2a"/>
<line x1="1283" y1="712.4" x2="1347" y2="712.4" stroke="#808080" stroke-width="3.6"/>
<rect x="1283" y="732.6" width="64" height="31.5" fill="#ccd6fb"/>
<text x="1351.6" y="656.5" font-size="22.09" fill="#262626" textLength="161.6" lengthAdjust="spacingAndGlyphs">AutomotiveRadar</text>
<text x="1351.6" y="687.3" font-size="22.09" fill="#262626" textLength="148.4" lengthAdjust="spacingAndGlyphs">Target Positions</text>
<text x="1351.6" y="718.2" font-size="22.09" fill="#262626" textLength="232.0" lengthAdjust="spacingAndGlyphs">Effective Radius = Inf km</text>
<text x="1351.6" y="754.0" font-size="22.09" fill="#262626" textLength="107.6" lengthAdjust="spacingAndGlyphs">Free Space</text>
<path d="M64 77.9 H74 Q76 77.9 76 79.9 V94 H89.8 Q91.8 94 91.8 96 V105.9 Q91.8 107.9 89.8 107.9 H76 V121.8 Q76 123.8 74 123.8 H64 Q62 123.8 62 121.8 V107.9 H47.9 Q45.9 107.9 45.9 105.9 V96 Q45.9 94 47.9 94 H62 V79.9 Q62 77.9 64 77.9 Z" fill="#ffea8c" stroke="#5e4503" stroke-width="1.7"/>
<path d="M168 119 V85 Q168 84.3 168.7 84.3 H180 L184 88.4 H208 Q208.8 88.4 208.8 89.2 V119 Z" fill="#ffe9a3" stroke="#654a05" stroke-width="1.5"/>
<path d="M162 95.2 H202 L208.8 119 H168.5 Z" fill="#fff3b8" stroke="#654a05" stroke-width="1.5" stroke-linejoin="round"/>
<path d="M251 78 H294.5 Q295.5 78 295.5 79 V121.5 Q295.5 122.5 294.5 122.5 H257.5 L250.5 116.5 V78.5 Z" fill="#b5ddff" stroke="#1b55ab" stroke-width="1.8" stroke-linejoin="round"/>
<rect x="257.2" y="77.8" width="32.3" height="22.3" fill="#ffffff" stroke="#1b55ab" stroke-width="1.8"/>
<rect x="258.6" y="105.4" width="28.6" height="16.6" fill="#ffffff" stroke="#1b55ab" stroke-width="1.8"/>
<rect x="263.8" y="111" width="6" height="11" fill="#1b55ab"/>
<rect x="396.5" y="78.5" width="37.5" height="37" rx="4.5" fill="#ffffff" stroke="#6b6b6b" stroke-width="1.6"/>
<path d="M402.5 88.5 H427.5 L426.5 96.7 H403.5 Z" fill="#6b6b6b"/>
<path d="M406.3 88.8 L408.8 83 H421.2 L423.7 88.8" fill="#ffffff" stroke="#6b6b6b" stroke-width="1.6" stroke-linejoin="round"/>
<rect x="405.5" y="95" width="3.5" height="4.5" rx="1" fill="#6b6b6b"/><rect x="421" y="95" width="3.5" height="4.5" rx="1" fill="#6b6b6b"/>
<circle cx="408" cy="92" r="1.8" fill="#fff"/><circle cx="421.9" cy="92" r="1.8" fill="#fff"/>
<path d="M404.5 104.5 A10.5 10.5 0 0 0 424.5 104.5" fill="none" stroke="#6b6b6b" stroke-width="1.6"/>
<path d="M408 102.5 A7 7 0 0 0 421 102.5" fill="none" stroke="#6b6b6b" stroke-width="1.6"/>
<circle cx="431.1" cy="112.7" r="12" fill="#ccffbb" stroke="#0b7a0b" stroke-width="1.8"/>
<path d="M423 112.7 H439.3 M431.1 104.5 V121" stroke="#0b4d0b" stroke-width="1.7"/>
<rect x="528.8" y="96.5" width="21" height="21" rx="2" fill="#d9d9d9" stroke="#a3a3a3" stroke-width="1.5"/>
<rect x="536.6" y="104.7" width="21" height="21" rx="2" fill="#ffffff" stroke="#666666" stroke-width="1.6"/>
<rect x="528.6" y="144.4" width="29" height="29" rx="2" fill="#ff9e9e" stroke="#7a1212" stroke-width="1.6"/>
<path d="M534.4 150.5 L551.8 167.5 M551.8 150.5 L534.4 167.5" stroke="#6e0a0a" stroke-width="1.6"/>
<rect x="606.8" y="106.6" width="46.8" height="18.6" rx="2" fill="#ffffff" stroke="#666666" stroke-width="1.6"/>
<circle cx="645.9" cy="116.1" r="3.4" fill="#ccffbb" stroke="#0b8a0b" stroke-width="2"/>
<path d="M612 78.7 Q633 77 635 96.2 H646.4 L629.9 117.5 L613.4 96.2 H624.5 Q624 82 612 78.7 Z" fill="#ccffbb" stroke="#0b8a0b" stroke-width="2.1" stroke-linejoin="round"/>
<path d="M715.3 111.7 L750.2 77.3 L762.8 89.9 L727.9 124.3 Z" fill="#ffffff" stroke="#666666" stroke-width="2.2" stroke-linejoin="miter"/>
<path d="M731.4 120.9 l-3.2 -3.2 M737.7 114.7 l-4.9 -4.9 M744.0 108.5 l-3.2 -3.2 M750.2 102.3 l-4.9 -4.9 M756.5 96.1 l-3.2 -3.2" stroke="#666666" stroke-width="2"/>
<path d="M107.8 184.3 H122.8 L115.3 192.3 Z" fill="#555555"/>
<path d="M268.0 184.3 H283.0 L275.5 192.3 Z" fill="#555555"/>
<path d="M732.5 183.5 H747.5 L740 191.5 Z" fill="#555555"/>
<path d="M1053.4 179.4 H1068.4 L1060.9 187.4 Z" fill="#555555"/>
<path d="M1543.5 133.4 H1558.5 L1551 141.4 Z" fill="#555555"/>
<path d="M1734.5 183.7 H1749.5 L1742 191.7 Z" fill="#555555"/>
<rect x="1157.5" y="82.5" width="45" height="45" rx="3.5" fill="#ffffff" stroke="#666666" stroke-width="1.6"/>
<path d="M1158.5 85.3 Q1164 92.5 1170 92.5 H1176.6 Q1180 93 1186 101 Q1192 109.5 1201.5 113.5" fill="none" stroke="#1269c2" stroke-width="2"/>
<path d="M1158.5 95.7 Q1164 102.5 1170 102.5 H1176.6 Q1180 103 1186 111 Q1192 120 1201.5 123" fill="none" stroke="#d9531e" stroke-width="2"/>
<path d="M1158.5 108.9 H1202" stroke="#1269c2" stroke-width="2" stroke-dasharray="3.5 2.5"/>
<path d="M1158.5 119 H1202" stroke="#d9531e" stroke-width="2" stroke-dasharray="3.5 2.5"/>
<path d="M1192.1 83.5 V127" stroke="#222222" stroke-width="2" stroke-dasharray="3 2.5"/>
<rect x="1293.6" y="82.5" width="44.8" height="45" rx="3.5" fill="#ffffff" stroke="#666666" stroke-width="1.6"/>
<path d="M1294.7 102.5 Q1299 86 1303 86.9 Q1307 87.5 1311.2 104 Q1316 117 1324 118.5 Q1330 120.8 1337.5 121" fill="none" stroke="#1269c2" stroke-width="2"/>
<rect x="1430" y="83" width="44.3" height="44.3" rx="3.5" fill="#ffffff"/>
<path d="M1430.8 86.5 Q1430.8 83.3 1434 83.3 H1470.5 Q1473.7 83.3 1473.7 86.5 V96 H1430.8 Z" fill="#ccffbb"/>
<path d="M1430.8 96 H1451 V126.8 H1434 Q1430.8 126.8 1430.8 123.6 Z" fill="#ffcccc"/>
<path d="M1451 96 H1473.7 V123.6 Q1473.7 126.8 1470.5 126.8 H1451 Z" fill="#fff2b8"/>
<path d="M1431 87 Q1469 88 1469.7 126.5" fill="none" stroke="#d9531e" stroke-width="2"/>
<path d="M1431 97 Q1459 98 1459.6 126.5" fill="none" stroke="#1269c2" stroke-width="2"/>
<rect x="1430" y="82.5" width="44.3" height="45" rx="3.5" fill="none" stroke="#666666" stroke-width="1.6"/>
<path d="M1610.3 89.6 V82 Q1610.3 78.3 1614 78.3 H1652 Q1655.7 78.3 1655.7 82 V89.6 Z" fill="#b5ddff" stroke="#1b55ab" stroke-width="1.6"/>
<path d="M1610.3 89.6 H1655.7 V121.5 Q1655.7 125.2 1652 125.2 H1614 Q1610.3 125.2 1610.3 121.5 Z" fill="#ffffff" stroke="#666666" stroke-width="1.6"/>
<path d="M1610.3 89.6 H1655.7" stroke="#1b55ab" stroke-width="1.8"/>
<path d="M1632.9 90 V125 M1610.5 106.8 H1655.5" stroke="#666666" stroke-width="1.6"/>
<path d="M1723.3 101 L1734 112.5 L1759.1 86.7" fill="none" stroke="#0b5c0b" stroke-width="10.2" stroke-linecap="round" stroke-linejoin="round"/>
<path d="M1723.3 101 L1734 112.5 L1759.1 86.7" fill="none" stroke="#ccffbb" stroke-width="7" stroke-linecap="round" stroke-linejoin="round"/>
<rect x="1821.5" y="213.8" width="21.5" height="2.6" fill="#a6a6a6"/><path d="M1821.5 235 H1843 L1832.25 220.5 Z" fill="#a6a6a6"/>
<path d="M1629 12.8 H1657 V41.3 H1634.5 L1629 36 Z" fill="#b9dcf5" stroke="#1a1a1a" stroke-width="1.6" stroke-linejoin="round"/>
<rect x="1633" y="12.8" width="20" height="13.7" fill="#ffffff" stroke="#1a1a1a" stroke-width="1.5"/>
<rect x="1635.6" y="30.8" width="16.3" height="10.5" fill="#ffffff" stroke="#1a1a1a" stroke-width="1.5"/>
<rect x="1638" y="34.3" width="3.6" height="7" fill="#1a1a1a"/>
<path d="M1685 23 L1693 17.5 V21 H1701 Q1710.5 21 1710.5 30.5 Q1710.5 40.5 1701 40.5 H1694 V35.5 H1701 Q1705 35.5 1705 30.5 Q1705 26 1701 26 H1693 V29 Z" fill="#a9cdea" stroke="#4a6e90" stroke-width="1"/>
<path d="M1758 23 L1750 17.5 V21 H1742 Q1732.5 21 1732.5 30.5 Q1732.5 40.5 1742 40.5 H1749 V35.5 H1742 Q1738 35.5 1738 30.5 Q1738 26 1742 26 H1750 V29 Z" fill="#7b9dbd" stroke="#61809f" stroke-width="1"/>
<defs><radialGradient id="hg" cx="0.4" cy="0.35" r="0.7"><stop offset="0" stop-color="#ffffff"/><stop offset="0.6" stop-color="#e8e8e8"/><stop offset="1" stop-color="#9aa3ad"/></radialGradient></defs>
<circle cx="1799.6" cy="28" r="15.5" fill="url(#hg)"/>
<text x="1799.6" y="37.5" font-size="26" font-weight="bold" fill="#3c4a5e" text-anchor="middle">?</text>
<path d="M164.4 36.2 V69.1 L172 62.1 L177.2 73.5 L181.4 71.4 L177.8 60.8 H188.7 Z" fill="#ffffff" stroke="#000000" stroke-width="1.2" stroke-linejoin="miter"/>
</svg>
</body></html>
